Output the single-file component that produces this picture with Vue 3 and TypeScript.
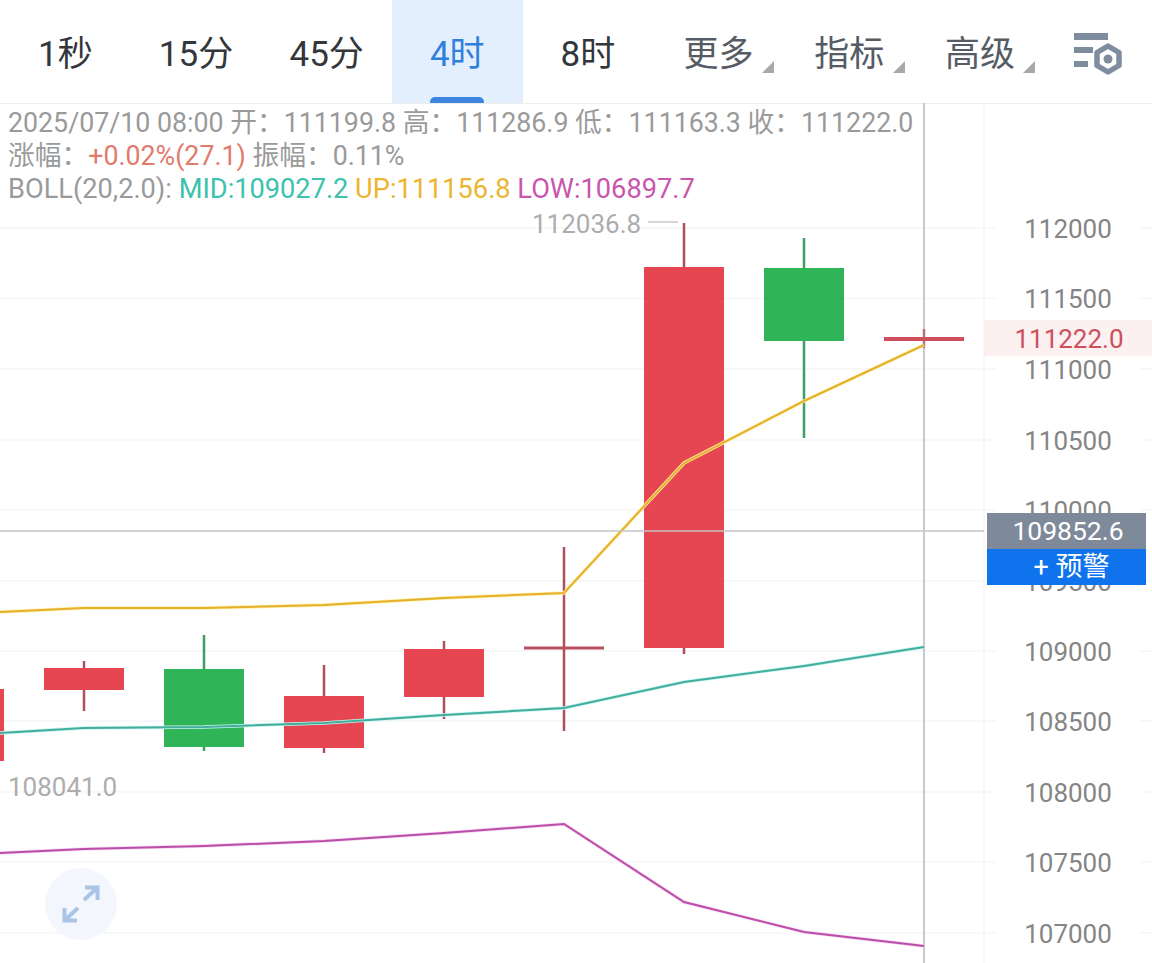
<script setup lang="ts">
const tabs = [
  { label: '1秒' }, { label: '15分' }, { label: '45分' }, { label: '4时', active: true }, { label: '8时' },
  { label: '更多', menu: true }, { label: '指标', menu: true }, { label: '高级', menu: true },
]
const gridYs = [228, 298.5, 369, 440, 510, 581, 651, 721, 792, 862, 933]
const axis = [
  [112000, 228], [111500, 298], [111000, 369], [110500, 440], [110000, 510], [109500, 581],
  [109000, 651], [108500, 721], [108000, 792], [107500, 862], [107000, 933],
]
const RED = '#e64552'
const GREEN = '#2fb457'
const WICK_R = '#ad4f5e'
const WICK_G = '#3f9f5f'
const candles = [
  { x: -36, t: 689, b: 761, hi: 680, lo: 770, c: RED, w: WICK_R },
  { x: 84, t: 668, b: 690, hi: 661, lo: 711, c: RED, w: WICK_R },
  { x: 204, t: 669, b: 747, hi: 635, lo: 751, c: GREEN, w: WICK_G },
  { x: 324, t: 696, b: 748, hi: 665, lo: 753, c: RED, w: WICK_R },
  { x: 444, t: 649, b: 697, hi: 641, lo: 719, c: RED, w: WICK_R },
  { x: 564, t: 646.5, b: 649.5, hi: 547, lo: 731, c: '#b85060', w: WICK_R },
  { x: 684, t: 267, b: 648, hi: 223, lo: 654, c: RED, w: WICK_R },
  { x: 804, t: 268, b: 341, hi: 238, lo: 438, c: GREEN, w: WICK_G },
  { x: 924, t: 337, b: 341, hi: 329, lo: 348, c: '#d04f5c', w: '#b5717b' },
]
const lines = [
  { pts: '0,612 84,608 204,608 324,605 444,598 564,593 684,463 804,401 924,345', core: '#e4b02e', halo: '#fff0a8' },
  { pts: '0,733 84,728 204,727 324,723 444,715 564,708 684,682 804,666 924,647', core: '#44ad9d', halo: '#c5f5ee' },
  { pts: '0,853 84,849 204,846 324,841 444,833 564,824 684,902 804,932 924,946', core: '#b94fa6', halo: '#fbd6f4' },
]
</script>

<template>
  <div class="page">
    <header class="bar">
      <div v-for="t in tabs" :key="t.label" class="tab" :class="{ active: t.active, menu: t.menu }">
        <span>{{ t.label }}</span>
      </div>
      <div class="tool">
        <svg width="50" height="42" viewBox="0 0 50 42">
          <rect x="0" y="0" width="34" height="7" fill="#7f8c9e" />
          <rect x="0" y="14" width="19" height="6" fill="#7f8c9e" />
          <rect x="0" y="28" width="14" height="6" fill="#7f8c9e" />
          <path d="M34 13 L45 19.5 L45 32.5 L34 39 L23 32.5 L23 19.5 Z" fill="none" stroke="#7f8c9e" stroke-width="5.5" stroke-linejoin="round" />
          <circle cx="34" cy="26" r="4.5" fill="#7f8c9e" />
        </svg>
      </div>
    </header>

    <main class="chart">
      <svg class="plot" width="1152" height="860" viewBox="0 103 1152 860">
        <g stroke="#f5f6f8" stroke-width="1.5">
          <line v-for="y in gridYs" :key="y" x1="0" x2="996" :y1="y" :y2="y" />
          <line v-for="y in gridYs" :key="'r' + y" x1="1140" x2="1152" :y1="y" :y2="y" />
          <line x1="984" x2="984" y1="103" y2="963" />
        </g>
        <rect x="984" y="320" width="168" height="36" fill="#fdf0f0" />
        <line x1="924" x2="924" y1="103" y2="963" stroke="#c9c9c9" stroke-width="2" />
        <g v-for="c in candles" :key="c.x">
          <line :x1="c.x" :x2="c.x" :y1="c.hi" :y2="c.lo" :stroke="c.w" stroke-width="2.5" />
          <rect :x="c.x - 40" :y="c.t" width="80" :height="c.b - c.t" :fill="c.c" />
        </g>
        <g v-for="l in lines" :key="l.core" fill="none">
          <polyline :points="l.pts" :stroke="l.halo" stroke-width="3.5" />
          <polyline :points="l.pts" :stroke="l.core" stroke-width="2" />
        </g>
        <line x1="0" x2="984" y1="531" y2="531" stroke="#c4c4c4" stroke-width="1.5" />
        <line x1="648" x2="678" y1="222" y2="222" stroke="#c9c9c9" stroke-width="1.5" />
        <g class="axis">
          <text v-for="a in axis" :key="a[0]" x="1068" :y="a[1] + 9.5" text-anchor="middle">{{ a[0] }}</text>
          <text x="1069" y="348" text-anchor="middle" class="last">111222.0</text>
        </g>
        <text class="extreme" x="532" y="233">112036.8</text>
        <text class="extreme" x="8" y="796">108041.0</text>
      </svg>

      <div class="legend">
        <div>2025/07/10 08:00 开：111199.8 高：111286.9 低：111163.3 收：111222.0</div>
        <div>涨幅：<span class="rise">+0.02%(27.1)</span> 振幅：0.11%</div>
        <div class="boll">BOLL(20,2.0): <span class="mid">MID:109027.2</span> <span class="up">UP:111156.8</span> <span class="low">LOW:106897.7</span></div>
      </div>

      <div class="tags">
        <div class="tag price">109852.6</div>
        <div class="tag alert">+ 预警</div>
      </div>

      <div class="expand">
        <svg width="40" height="40" viewBox="0 0 40 40" fill="none" stroke="#a9c4e6" stroke-width="4">
          <path d="M23 16 L36 4 M24 3.5 H36.5 V16" />
          <path d="M17 24 L4 36 M3.5 24 V36.5 H16" />
        </svg>
      </div>
    </main>
  </div>
</template>

<style scoped>
.page {
  width: 1152px;
  height: 963px;
  overflow: hidden;
  background: #fff;
  font-family: Roboto, "Noto Sans CJK SC", sans-serif;
}
.bar {
  display: flex;
  height: 103px;
  border-bottom: 1px solid #eeeeee;
  box-sizing: content-box;
}
.tab {
  position: relative;
  width: 130.67px;
  display: flex;
  align-items: center;
  justify-content: center;
  padding-bottom: 3px;
  box-sizing: border-box;
  font-size: 35px;
  color: #33363b;
}
.tab.active {
  background: #e3effc;
  color: #2f7fdc;
}
.tab.menu {
  color: #565c65;
}
.tab.active::after {
  content: "";
  position: absolute;
  left: 38px;
  bottom: 0;
  width: 54px;
  height: 6px;
  border-radius: 5px 5px 0 0;
  background: #3d86e0;
}
.tab.menu::after {
  content: "";
  position: absolute;
  right: 10px;
  top: 61px;
  width: 0;
  height: 0;
  border-style: solid;
  border-width: 0 0 12px 12px;
  border-color: transparent transparent #a8a8a8 transparent;
}
.tool {
  flex: 1;
  display: flex;
  align-items: flex-start;
  padding: 33px 0 0 29px;
}
.chart {
  position: relative;
  height: 859px;
}
.plot {
  position: absolute;
  left: 0;
  top: -1px;
}
.axis text {
  font-size: 26px;
  fill: #858585;
}
.axis text.last {
  fill: #cc505c;
}
.extreme {
  font-size: 26px;
  fill: #adadad;
}
.legend {
  position: relative;
  padding: 3px 0 0 8px;
  font-size: 26.75px;
  line-height: 33px;
  color: #9a9a9a;
  white-space: nowrap;
}
.boll { font-size: 27.2px; }
.rise { color: #e27a6d; }
.mid { color: #3cc2ad; }
.up { color: #ecb52f; }
.low { color: #c955ad; }
.tags {
  position: absolute;
  left: 987px;
  top: 409px;
  width: 159px;
}
.tag {
  height: 36px;
  line-height: 36px;
  text-align: center;
  color: #fff;
  font-size: 26.5px;
  padding-left: 3px;
  box-sizing: border-box;
}
.price { background: #7e8a9a; }
.alert {
  background: #0f73ee;
  font-size: 27px;
  padding-left: 10px;
}
.expand {
  position: absolute;
  left: 45px;
  top: 764px;
  width: 72px;
  height: 72px;
  border-radius: 50%;
  background: #f3f7fd;
  display: flex;
  align-items: center;
  justify-content: center;
}
</style>
